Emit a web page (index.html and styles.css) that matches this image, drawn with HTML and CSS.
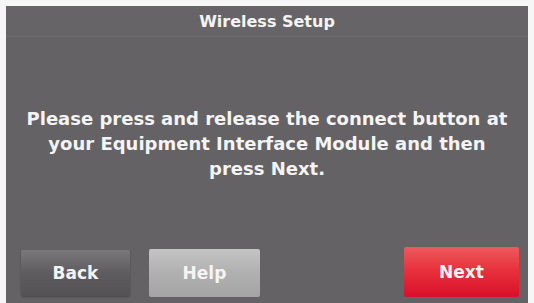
FILE: index.html
```html
<!DOCTYPE html>
<html lang="en">
<head>
    <meta charset="UTF-8">
    <meta name="viewport" content="width=device-width, initial-scale=1.0">
    <title>Wireless Setup</title>
    <link rel="stylesheet" href="styles.css">
</head>
<body>
    <div class="screen">
        <div class="title-bar">Wireless Setup</div>
        <div class="message">
            Please press and release the connect button at<br>
            your Equipment Interface Module and then<br>
            press Next.
        </div>
        <div class="buttons">
            <button class="button back">Back</button>
            <button class="button help">Help</button>
            <span class="spacer"></span>
            <button class="button next">Next</button>
        </div>
    </div>
</body>
</html>
```

FILE: styles.css
```css
body {
    margin: 0;
    background-color: #f6f6f6;
    font-family: "DejaVu Sans", Verdana, sans-serif;
}
.screen {
    margin: 6px 6px 0 6px;
    height: 297px;
    background-color: #646264;
    display: flex;
    flex-direction: column;
    color: #f4f4f4;
}
.title-bar {
    height: 30px;
    border-bottom: 1px solid #6e6c6e;
    background-color: #666466;
    text-align: center;
    font-weight: bold;
    font-size: 16px;
    line-height: 31px;
}
.message {
    padding: 69px 4px 0 4px;
    text-align: center;
    font-weight: bold;
    font-size: 18px;
    line-height: 25px;
    height: 210px;
    box-sizing: border-box;
    white-space: nowrap;
}
.buttons {
    display: flex;
    align-items: flex-start;
    padding: 0 9px 0 15px;
    gap: 19px;
}
.spacer {
    flex: 1;
}
.button {
    font-family: "DejaVu Sans", Verdana, sans-serif;
    font-weight: bold;
    font-size: 17px;
    color: #f4f4f4;
    border: none;
    border-radius: 2px;
    cursor: pointer;
}
.back {
    width: 109px;
    height: 46px;
    margin-top: 3px;
    background: linear-gradient(#7a787a, #5e5c5e 50%, #545254);
    box-shadow: 0 1px 2px #4a484a;
}
.help {
    width: 111px;
    height: 48px;
    margin-top: 2px;
    background: linear-gradient(#c4c4c4, #b0b0b0 50%, #a4a4a4);
}
.next {
    width: 115px;
    height: 50px;
    background: linear-gradient(#ec5a5e, #e8323c 45%, #d8102a);
}
```
